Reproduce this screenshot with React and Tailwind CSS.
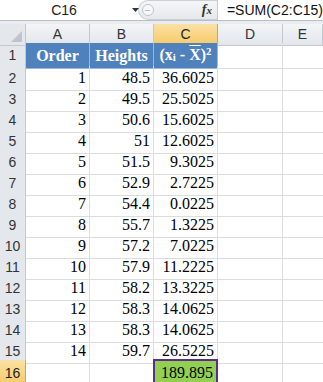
const rows = [
  [1, '48.5', '36.6025'],
  [2, '49.5', '25.5025'],
  [3, '50.6', '15.6025'],
  [4, '51', '12.6025'],
  [5, '51.5', '9.3025'],
  [6, '52.9', '2.7225'],
  [7, '54.4', '0.0225'],
  [8, '55.7', '1.3225'],
  [9, '57.2', '7.0225'],
  [10, '57.9', '11.2225'],
  [11, '58.2', '13.3225'],
  [12, '58.3', '14.0625'],
  [13, '58.3', '14.0625'],
  [14, '59.7', '26.5225'],
];

const sans = { fontFamily: '"Liberation Sans", Arial, sans-serif' };
const serif = { fontFamily: '"Liberation Serif", "Times New Roman", serif' };

const gridCols = 'grid grid-cols-[26px_64px_64px_64px_65px_1fr]';

const App = () => {
  return (
    <div className="w-[323px] h-[382px] overflow-hidden bg-white text-black" style={sans}>
      {/* Formula bar */}
      <div className="flex h-[21px] border-b border-[#b9bec5] bg-white">
        <div className="w-[143px] flex items-center relative">
          <span className="w-[128px] text-center text-[14px] text-[#222]">C16</span>
          <svg className="absolute left-[132px] top-[8px]" width="7" height="4" viewBox="0 0 7 4">
            <path d="M0 0h7L3.5 4z" fill="#333" />
          </svg>
        </div>
        <div className="w-[82px] flex items-center justify-between rounded-l-full bg-gradient-to-b from-[#f5f6f8] to-[#e6e9ec] border border-[#ccd0d5] border-r-0 pl-[3px] pr-[5px]">
          <span className="w-[12px] h-[12px] rounded-full border border-[#bfc3c8] bg-[#f7f8f9] flex items-center justify-center">
            <span className="w-[5px] h-px bg-[#bbb]" />
          </span>
          <span className="italic font-bold text-[14px] text-[#333] leading-none" style={serif}>
            f<span className="text-[11px]">x</span>
          </span>
        </div>
        <div className="flex-1 flex items-center border-l border-[#c6cad0] pl-[9px] text-[14px] text-[#111]">
          =SUM(C2:C15)
        </div>
      </div>
      <div className="h-[3px] bg-[#e9ecf0]" />

      {/* Column headers */}
      <div className={`${gridCols} h-[19px] text-[14px] text-[#333]`}>
        <div className="relative bg-[#e4e8ed] border-r border-b border-[#c3c8cf]">
          <svg className="absolute right-[3px] bottom-[3px]" width="11" height="11" viewBox="0 0 11 11">
            <path d="M11 0v11H0z" fill="#bfc4ca" />
          </svg>
        </div>
        {['A', 'B', 'C', 'D', 'E'].map((c) => (
          <div
            key={c}
            className={`flex items-center justify-center border-r border-b ${
              c === 'C'
                ? 'bg-gradient-to-b from-[#fbe1a4] to-[#f5c964] border-[#d9a73e] text-[#222]'
                : 'bg-gradient-to-b from-[#f3f5f7] to-[#e2e6eb] border-[#c3c8cf]'
            }`}
          >
            {c}
          </div>
        ))}
      </div>

      {/* Row 1 - table header */}
      <div className={`${gridCols} h-[23px]`}>
        <div className="flex items-center justify-center bg-[#e4e8ed] border-r border-b border-[#c3c8cf] text-[14px] text-[#333]">1</div>
        <div className="flex items-center justify-center bg-[#4f81bd] border-r border-b border-[#9bb5d6] text-white font-bold text-[16px]" style={serif}>Order</div>
        <div className="flex items-center justify-center bg-[#4f81bd] border-r border-b border-[#9bb5d6] text-white font-bold text-[16px]" style={serif}>Heights</div>
        <div className="flex items-center justify-center bg-[#4f81bd] border-r border-b border-[#9bb5d6] text-white font-bold text-[16px] pb-[1px]" style={serif}>
          (x<sub className="text-[11px] relative top-[2px]">i</sub>&nbsp;-&nbsp;<span className="overline">X</span>)<sup className="text-[11px] relative -top-[4px]">2</sup>
        </div>
        <div className="border-r border-b border-[#dadcdf]" />
        <div className="border-b border-[#dadcdf]" />
      </div>

      {/* Data rows */}
      {rows.map(([n, h, d], i) => (
        <div key={n} className={`${gridCols} h-[21px] text-[16px]`} style={serif}>
          <div className="flex items-center justify-center bg-[#e4e8ed] border-r border-b border-[#c3c8cf] text-[14px] text-[#333]" style={sans}>
            {i + 2}
          </div>
          <div className="flex items-center justify-end pr-[3px] border-r border-b border-[#dadcdf]">{n}</div>
          <div className="flex items-center justify-end pr-[3px] border-r border-b border-[#dadcdf]">{h}</div>
          <div className="flex items-center justify-end pr-[3px] border-r border-b border-[#dadcdf]">{d}</div>
          <div className="border-r border-b border-[#dadcdf]" />
          <div className="border-b border-[#dadcdf]" />
        </div>
      ))}

      {/* Row 16 - total */}
      <div className={`${gridCols} h-[21px] text-[16px]`} style={serif}>
        <div className="flex items-center justify-center bg-gradient-to-b from-[#fbe1a4] to-[#f5c964] border-r border-b border-[#d9a73e] text-[14px] text-[#222]" style={sans}>
          16
        </div>
        <div className="border-r border-b border-[#dadcdf]" />
        <div className="border-r border-b border-[#dadcdf]" />
        <div className="relative flex items-center justify-end pr-[3px] bg-[#92d050] border-2 border-[#5b2c8a] -ml-px -mt-px">
          189.895
          <span className="absolute -right-[3px] -bottom-[3px] w-[5px] h-[5px] bg-[#222] border border-white" />
        </div>
        <div className="border-r border-b border-[#dadcdf]" />
        <div className="border-b border-[#dadcdf]" />
      </div>
    </div>
  );
};

export default App;
